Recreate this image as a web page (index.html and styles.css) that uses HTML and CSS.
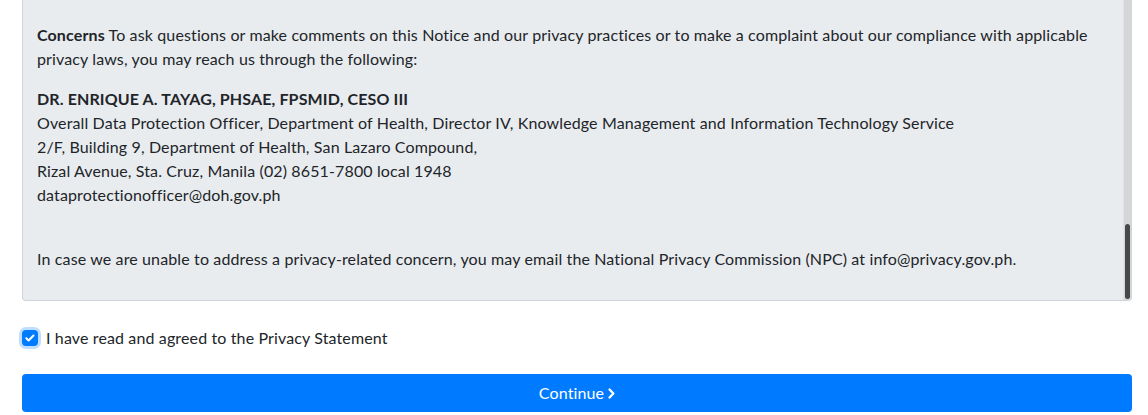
FILE: index.html
```html
<!DOCTYPE html>
<html lang="en">
<head>
<meta charset="utf-8">
<title>Privacy Statement</title>
<link rel="stylesheet" href="styles.css">
</head>
<body>
<main class="page">
  <section class="notice">
    <div class="notice-scroll">
      <div class="notice-inner">
        <div class="notice-earlier"></div>
        <p><strong>Concerns</strong> To ask questions or make comments on this Notice and our privacy practices or to make a complaint about our compliance with applicable privacy laws, you may reach us through the following:</p>
        <p><strong>DR. ENRIQUE A. TAYAG, PHSAE, FPSMID, CESO III</strong><br>
        Overall Data Protection Officer, Department of Health, Director IV, Knowledge Management and Information Technology Service<br>
        2/F, Building 9, Department of Health, San Lazaro Compound,<br>
        Rizal Avenue, Sta. Cruz, Manila (02) 8651-7800 local 1948<br>
        dataprotectionofficer@doh.gov.ph</p>
        <p><br>In case we are unable to address a privacy-related concern, you may email the National Privacy Commission (NPC) at info@privacy.gov.ph.</p>
      </div>
    </div>
    <div class="scrollbar"><div class="scrollbar-thumb"></div></div>
  </section>

  <label class="agree">
    <span class="check">
      <svg viewBox="0 0 16 16" width="16" height="16"><path d="M4.3 8.2l2.3 2.3 4.9-5" fill="none" stroke="#fff" stroke-width="2" stroke-linecap="round" stroke-linejoin="round"/></svg>
    </span>
    <span class="agree-text">I have read and agreed to the Privacy Statement</span>
  </label>

  <button class="continue" type="button">Continue
    <svg class="chev" viewBox="0 0 8 12" width="7" height="11"><path d="M1.8 1.5l4.3 4.5-4.3 4.5" fill="none" stroke="#fff" stroke-width="2.6" stroke-linecap="round" stroke-linejoin="round"/></svg>
  </button>
</main>
</body>
</html>
```

FILE: styles.css
```css
* { box-sizing: border-box; }

html, body {
  margin: 0;
  background: #fff;
}

body {
  font-family: Lato, "Open Sans", sans-serif;
  font-size: 16px;
  line-height: 24px;
  letter-spacing: 0.13px;
  color: #212529;
}

.page {
  display: flex;
  flex-direction: column;
  padding: 0 16px 0 22px;
}

.notice {
  position: relative;
  height: 301px;
  background: #e9ecef;
  border: 1px solid #ced4da;
  border-top: 0;
  border-radius: 0 0 4px 4px;
}

.notice-scroll {
  height: 100%;
  overflow-y: scroll;
  scrollbar-width: none;
  display: flex;
  flex-direction: column-reverse;
}
.notice-scroll::-webkit-scrollbar {
  display: none;
}

.scrollbar {
  position: absolute;
  top: 0;
  right: 0;
  bottom: 0;
  width: 8px;
  background: #d6d6d6;
  border-left: 1px solid #e1e3e5;
  border-radius: 0 0 3px 0;
}

.scrollbar-thumb {
  position: absolute;
  left: 1px;
  right: 1px;
  bottom: 1px;
  height: 75px;
  background: #484848;
  border-radius: 3px;
}

.notice-inner {
  padding: 0 20px 13px 14px;
}

.notice-earlier {
  height: 905px;
}

.notice p {
  margin: 0 0 16px;
}

.notice strong {
  font-weight: 700;
}

.agree {
  display: flex;
  align-items: center;
  gap: 8px;
  margin-top: 25px;
  height: 24px;
  cursor: pointer;
}

.check {
  width: 16px;
  height: 16px;
  border-radius: 4px;
  background: #007bff;
  box-shadow: 0 0 0 3px rgba(0, 123, 255, 0.25);
  display: flex;
  flex: none;
}

.continue {
  margin-top: 24px;
  height: 38px;
  border: 0;
  border-radius: 4px;
  background: #007bff;
  color: #fff;
  font-family: inherit;
  font-size: 16px;
  line-height: 24px;
  letter-spacing: 0.13px;
  display: flex;
  align-items: center;
  justify-content: center;
  gap: 4px;
  cursor: pointer;
}

.chev {
  margin-top: 1px;
}
```
